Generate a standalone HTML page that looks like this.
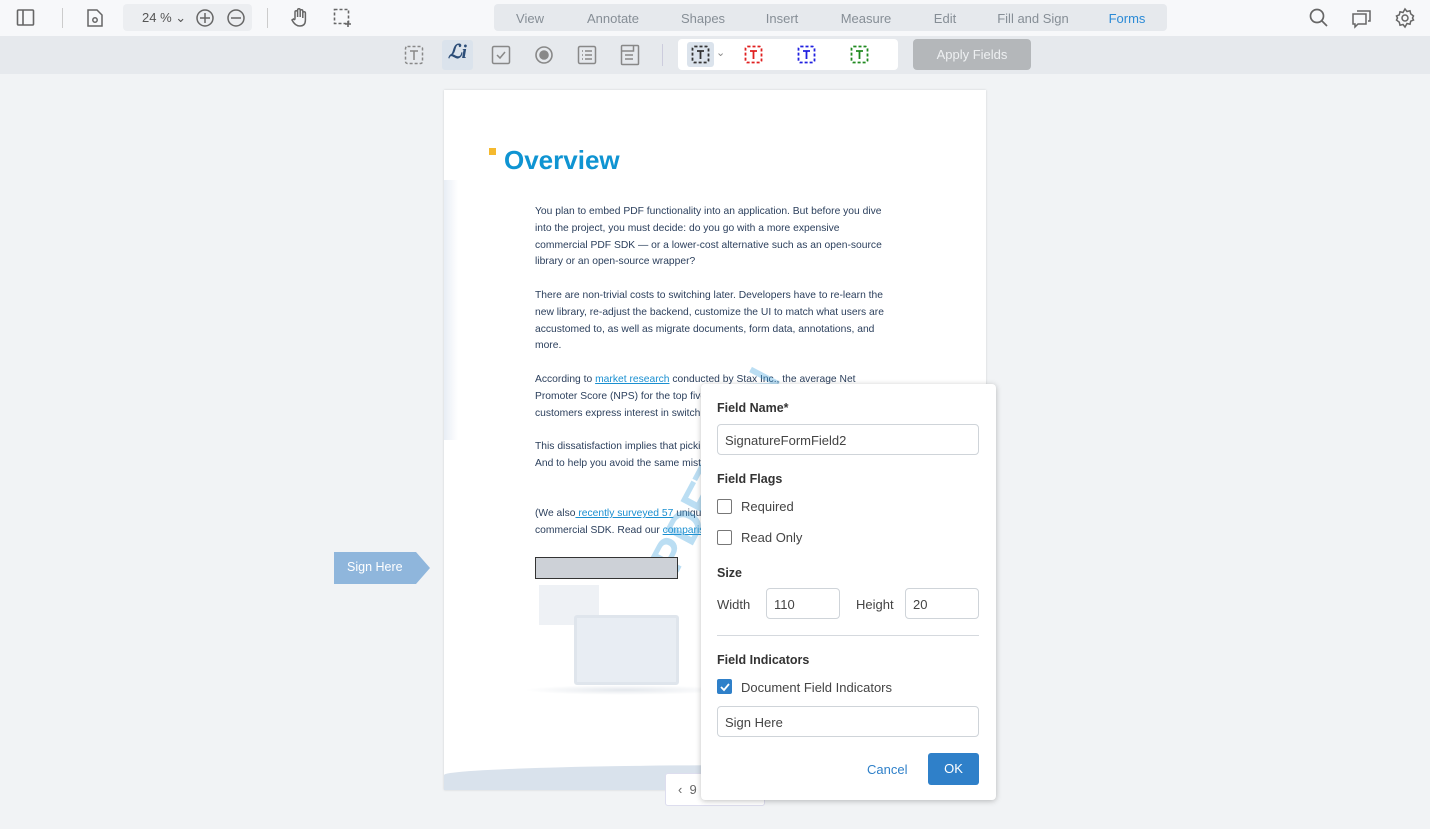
<!DOCTYPE html>
<html><head><meta charset="utf-8"><style>
*{box-sizing:border-box;margin:0;padding:0}
body{width:1430px;height:829px;overflow:hidden;background:#f1f3f5;font-family:"Liberation Sans",sans-serif;position:relative;color:#333}
.a{position:absolute}
.top{left:0;top:0;width:1430px;height:36px;background:#f7f8fa}
.bar2{left:0;top:36px;width:1430px;height:38px;background:#e6e9ed}
.tabs{left:494px;top:4px;width:673px;height:27px;background:#e6e9ed;border-radius:4px}
.tab{position:absolute;top:11px;font-size:13px;color:#868e96;transform:translateX(-50%)}
.page{left:444px;top:90px;width:542px;height:700px;background:#fff;box-shadow:0 0 2px rgba(0,0,0,.15);overflow:hidden}
.p{position:absolute;left:91px;font-size:10.3px;line-height:16.8px;color:#2b3f5c;width:356px}
.lk{color:#1a8fd0;text-decoration:underline}
.dlg{left:701px;top:384px;width:295px;height:416px;background:#fff;border-radius:4px;box-shadow:0 1px 6px rgba(0,0,0,.25)}
.lbl{position:absolute;left:16px;font-size:12.5px;font-weight:bold;color:#333}
.txt{position:absolute;font-size:13px;color:#444}
.inp{position:absolute;height:31px;border:1px solid #cfd4d9;border-radius:4px;font-size:13px;color:#444;padding:8px 7px}
.cb{position:absolute;left:16px;width:15px;height:15px;border:1.5px solid #777;border-radius:2px}
svg{position:absolute}
</style></head><body>
<div class="a top"></div>
<div class="a bar2"></div>
<svg style="left:16px;top:8px" width="20" height="20" fill="none" stroke="#666" stroke-width="1.6"><rect x="1.5" y="2" width="16" height="15" rx="1"/><line x1="7" y1="2" x2="7" y2="17"/></svg>
<div class="a" style="left:62px;top:8px;width:1px;height:20px;background:#ccc"></div>
<svg style="left:86px;top:8px" width="18" height="20" fill="none" stroke="#666" stroke-width="1.5"><path d="M2 2h9l5 5v11H2z"/><circle cx="9" cy="12" r="2.2"/></svg>
<div class="a" style="left:123px;top:4px;width:129px;height:27px;background:#eceef1;border-radius:4px"></div>
<div class="a" style="left:142px;top:10px;font-size:13px;color:#555">24 % ⌄</div>
<svg style="left:195px;top:8px" width="20" height="20" fill="none" stroke="#666" stroke-width="1.5"><circle cx="10" cy="10" r="8"/><path d="M10 5v10M5 10h10"/></svg>
<svg style="left:226px;top:8px" width="20" height="20" fill="none" stroke="#666" stroke-width="1.5"><circle cx="10" cy="10" r="8"/><path d="M5 10h10"/></svg>
<div class="a" style="left:267px;top:8px;width:1px;height:20px;background:#ccc"></div>
<svg style="left:290px;top:7px" width="20" height="22" fill="none" stroke="#666" stroke-width="1.5"><path d="M5 11V5a1.3 1.3 0 012.6 0v5V3a1.3 1.3 0 012.6 0v7V4a1.3 1.3 0 012.6 0v7V6a1.3 1.3 0 012.6 0v7c0 4-2 6-5.5 6S4 17 2 13l1.5-1c1 1 1.5 1 1.5-1"/></svg>
<svg style="left:333px;top:8px" width="20" height="20" fill="none" stroke="#666" stroke-width="1.6"><rect x="1.5" y="1.5" width="14" height="14" stroke-dasharray="3 2"/><path d="M15 13v6M12 16h6"/></svg>
<div class="a tabs"></div>
<div class="tab" style="left:530px">View</div>
<div class="tab" style="left:613px">Annotate</div>
<div class="tab" style="left:703px">Shapes</div>
<div class="tab" style="left:782px">Insert</div>
<div class="tab" style="left:866px">Measure</div>
<div class="tab" style="left:945px">Edit</div>
<div class="tab" style="left:1033px">Fill and Sign</div>
<div class="tab" style="left:1127px;color:#2b8ad6">Forms</div>
<svg style="left:1308px;top:7px" width="22" height="22" fill="none" stroke="#666" stroke-width="1.7"><circle cx="9" cy="9" r="6.5"/><path d="M14 14l5 5"/></svg>
<svg style="left:1351px;top:7px" width="22" height="22" fill="none" stroke="#666" stroke-width="1.5"><path d="M6 4h13v10h-2M2 7h13v10H7l-3 3v-3H2z"/></svg>
<svg style="left:1394px;top:7px" width="22" height="22" fill="none" stroke="#666" stroke-width="1.5"><circle cx="11" cy="11" r="3"/><path d="M11 2l2 2.5 3-.7.7 3L19.5 9 18.5 11l1 2-2.8 1.2-.7 3-3-.7L11 20l-2-2.5-3 .7-.7-3L2.5 13l1-2-1-2 2.8-1.2.7-3 3 .7z"/></svg>
<svg style="left:404px;top:45px" width="20" height="20" fill="none" stroke="#888" stroke-width="1.5"><rect x="1.5" y="1.5" width="17" height="17" rx="2" stroke-dasharray="3 2"/><path d="M6 6h8M10 6v9"/></svg>
<div class="a" style="left:442px;top:40px;width:31px;height:30px;background:#dbe3ec;border-radius:3px"></div>
<div class="a" style="left:448px;top:41px;font-family:'Liberation Serif',serif;font-style:italic;font-size:19px;color:#2b4d78;font-weight:bold">ℒi</div>
<svg style="left:491px;top:45px" width="20" height="20" fill="none" stroke="#888" stroke-width="1.5"><rect x="1.5" y="1.5" width="17" height="17" rx="1.5"/><path d="M6 10l3 3 5-6"/></svg>
<svg style="left:534px;top:45px" width="20" height="20" fill="none" stroke="#888" stroke-width="1.6"><circle cx="10" cy="10" r="8"/><circle cx="10" cy="10" r="4" fill="#888"/></svg>
<svg style="left:577px;top:45px" width="20" height="20" fill="none" stroke="#888" stroke-width="1.5"><rect x="1.5" y="1.5" width="17" height="17" rx="1.5"/><path d="M5 6h1M8 6h7M5 10h1M8 10h7M5 14h1M8 14h7"/></svg>
<svg style="left:620px;top:44px" width="20" height="22" fill="none" stroke="#888" stroke-width="1.5"><rect x="1.5" y="1.5" width="17" height="19" rx="1"/><path d="M1.5 7h12v-5.5M5 11h8M5 15h8"/></svg>
<div class="a" style="left:662px;top:44px;width:1px;height:22px;background:#ccd"></div>
<div class="a" style="left:678px;top:39px;width:220px;height:31px;background:#fff;border-radius:4px"></div>
<div class="a" style="left:687px;top:42px;width:27px;height:25px;background:#dbe3ec;border-radius:3px"></div>
<svg style="left:691px;top:45px" width="19" height="19" fill="none" stroke="#333" stroke-width="1.8"><rect x="1.5" y="1.5" width="16" height="16" rx="2" stroke-dasharray="3 2"/><path d="M6 6h7M9.5 6v8"/></svg>
<div class="a" style="left:716px;top:46px;font-size:11px;color:#888">⌄</div>
<svg style="left:744px;top:45px" width="19" height="19" fill="none" stroke="#e02020" stroke-width="1.8"><rect x="1.5" y="1.5" width="16" height="16" rx="2" stroke-dasharray="3 2"/><path d="M6 6h7M9.5 6v8"/></svg>
<svg style="left:797px;top:45px" width="19" height="19" fill="none" stroke="#2020e0" stroke-width="1.8"><rect x="1.5" y="1.5" width="16" height="16" rx="2" stroke-dasharray="3 2"/><path d="M6 6h7M9.5 6v8"/></svg>
<svg style="left:850px;top:45px" width="19" height="19" fill="none" stroke="#208a20" stroke-width="1.8"><rect x="1.5" y="1.5" width="16" height="16" rx="2" stroke-dasharray="3 2"/><path d="M6 6h7M9.5 6v8"/></svg>
<div class="a" style="left:913px;top:39px;width:118px;height:31px;background:#b4b7ba;border-radius:4px;color:#eef0f2;font-size:13px;text-align:center;line-height:31px">Apply Fields</div>
<div class="a page">
  <div class="a" style="left:0;top:90px;width:14px;height:260px;background:linear-gradient(90deg,#e8edf5,#fff)"></div>
  <div class="a" style="left:45px;top:58px;width:7px;height:7px;background:#f5b92e"></div>
  <div class="a" style="left:60px;top:55px;font-size:26px;font-weight:bold;color:#0f94d2">Overview</div>
  <div class="p" style="top:114px">You plan to embed PDF functionality into an application. But before you dive into the project, you must decide: do you go with a more expensive commercial PDF SDK — or a lower-cost alternative such as an open-source library or an open-source wrapper?</div>
  <div class="p" style="top:198px">There are non-trivial costs to switching later. Developers have to re-learn the new library, re-adjust the backend, customize the UI to match what users are accustomed to, as well as migrate documents, form data, annotations, and more.</div>
  <div class="p" style="top:282px">According to <span class="lk">market research</span> conducted by Stax Inc., the average Net Promoter Score (NPS) for the top five open-source PDF libraries is low; many customers express interest in switching.</div>
  <div class="p" style="top:349px">This dissatisfaction implies that picking an option isn't as easy as it seems. And to help you avoid the same mistakes, we've written this article.</div>
  <div class="p" style="top:416px">(We also<span class="lk"> recently surveyed 57</span> unique customers who switched to a commercial SDK. Read our <span class="lk">comparison</span>.)</div>
  <div class="a" style="font-size:46px;font-weight:bold;color:rgba(60,160,220,.35);transform:rotate(-62deg);transform-origin:left top;top:465px;left:195px">PDFTRON</div>
  <div class="a" style="left:91px;top:467px;width:143px;height:22px;background:#cdd1d7;border:1.5px solid #333"></div>
  <div class="a" style="left:95px;top:495px;width:60px;height:40px;background:#eef1f5"></div>
  <div class="a" style="left:130px;top:525px;width:105px;height:70px;background:#e8edf3;border:3px solid #dfe5ec;border-radius:3px"></div>
  <div class="a" style="left:80px;top:595px;width:200px;height:10px;background:radial-gradient(#e3e7ec,transparent 70%)"></div>
  <div class="a" style="left:0;top:675px;width:542px;height:25px;background:#d9e2ec;border-radius:60% 40% 0 0/40% 30% 0 0"></div>
</div>
<div class="a" style="left:665px;top:773px;width:100px;height:33px;background:#fff;border:1px solid #dde;border-radius:3px;font-size:13px;color:#666;padding:8px 12px">‹ &nbsp;9</div>
<svg style="left:334px;top:552px" width="96" height="32"><path d="M0 0h82l14 16-14 16H0z" fill="#8fb6dc"/></svg>
<div class="a" style="left:347px;top:560px;font-size:12.5px;color:#fff">Sign Here</div>
<div class="a dlg">
  <div class="lbl" style="top:17px">Field Name*</div>
  <div class="inp" style="left:16px;top:40px;width:262px">SignatureFormField2</div>
  <div class="lbl" style="top:88px">Field Flags</div>
  <div class="cb" style="top:115px"></div><div class="txt" style="left:40px;top:115px">Required</div>
  <div class="cb" style="top:146px"></div><div class="txt" style="left:40px;top:146px">Read Only</div>
  <div class="lbl" style="top:182px">Size</div>
  <div class="txt" style="left:16px;top:213px">Width</div>
  <div class="inp" style="left:65px;top:204px;width:74px">110</div>
  <div class="txt" style="left:155px;top:213px">Height</div>
  <div class="inp" style="left:204px;top:204px;width:74px">20</div>
  <div class="a" style="left:16px;top:251px;width:262px;height:1px;background:#d5d9de"></div>
  <div class="lbl" style="top:269px">Field Indicators</div>
  <div class="a" style="left:16px;top:295px;width:15px;height:15px;background:#2f80c9;border-radius:2px"></div>
  <svg style="left:18px;top:297px" width="12" height="12" fill="none" stroke="#fff" stroke-width="1.8"><path d="M2 6l3 3 5-6"/></svg>
  <div class="txt" style="left:40px;top:296px">Document Field Indicators</div>
  <div class="inp" style="left:16px;top:322px;width:262px">Sign Here</div>
  <div class="txt" style="left:166px;top:378px;color:#2f80c9">Cancel</div>
  <div class="a" style="left:227px;top:369px;width:51px;height:32px;background:#2f80c9;border-radius:3px;color:#fff;font-size:13px;text-align:center;line-height:32px">OK</div>
</div>
</body></html>
